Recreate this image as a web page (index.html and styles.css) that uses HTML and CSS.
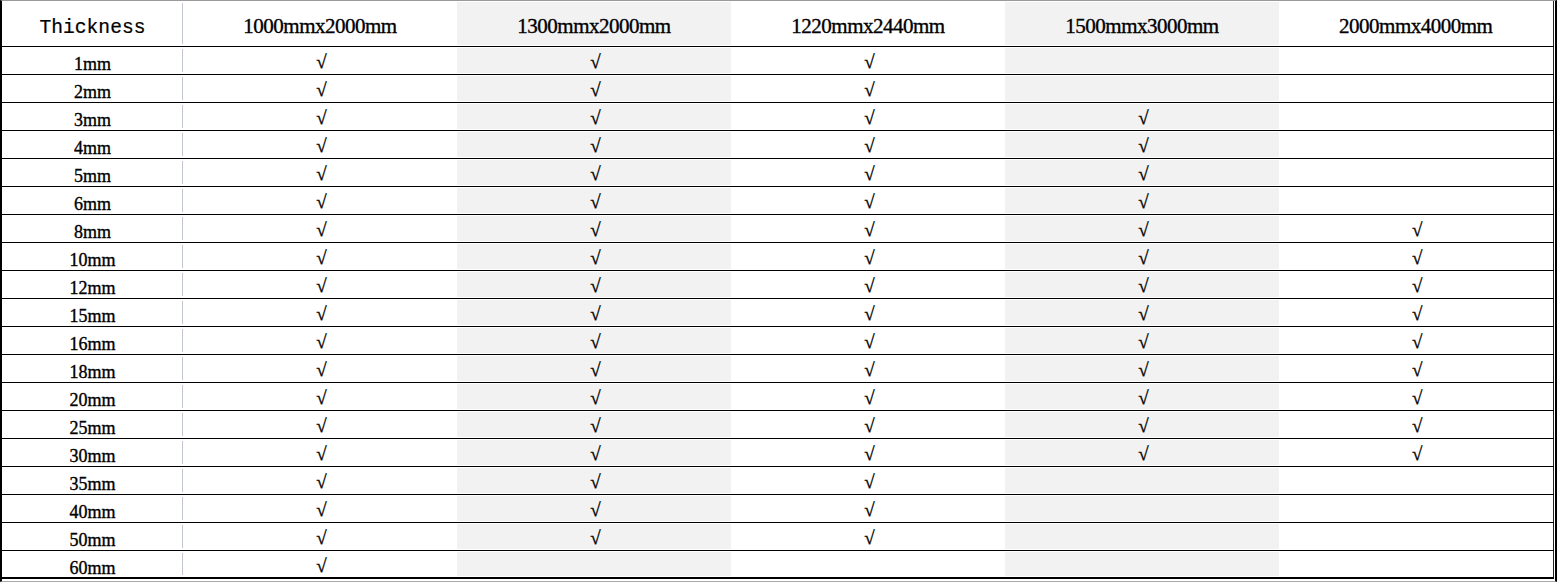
FILE: index.html
```html
<!DOCTYPE html>
<html>
<head>
<meta charset="utf-8">
<link rel="stylesheet" href="styles.css">
</head>
<body>
<div class="frame">
<table class="spec">
<colgroup>
<col class="c-first"><col class="c-size"><col class="c-size"><col class="c-size"><col class="c-size"><col class="c-last">
</colgroup>
<thead>
<tr>
<th class="label mono">Thickness</th>
<th>1000mmx2000mm</th>
<th class="g">1300mmx2000mm</th>
<th>1220mmx2440mm</th>
<th class="g">1500mmx3000mm</th>
<th>2000mmx4000mm</th>
</tr>
</thead>
<tbody>
<tr><td class="label">1mm</td><td>√</td><td class="g">√</td><td>√</td><td class="g"></td><td></td></tr>
<tr><td class="label">2mm</td><td>√</td><td class="g">√</td><td>√</td><td class="g"></td><td></td></tr>
<tr><td class="label">3mm</td><td>√</td><td class="g">√</td><td>√</td><td class="g">√</td><td></td></tr>
<tr><td class="label">4mm</td><td>√</td><td class="g">√</td><td>√</td><td class="g">√</td><td></td></tr>
<tr><td class="label">5mm</td><td>√</td><td class="g">√</td><td>√</td><td class="g">√</td><td></td></tr>
<tr><td class="label">6mm</td><td>√</td><td class="g">√</td><td>√</td><td class="g">√</td><td></td></tr>
<tr><td class="label">8mm</td><td>√</td><td class="g">√</td><td>√</td><td class="g">√</td><td>√</td></tr>
<tr><td class="label">10mm</td><td>√</td><td class="g">√</td><td>√</td><td class="g">√</td><td>√</td></tr>
<tr><td class="label">12mm</td><td>√</td><td class="g">√</td><td>√</td><td class="g">√</td><td>√</td></tr>
<tr><td class="label">15mm</td><td>√</td><td class="g">√</td><td>√</td><td class="g">√</td><td>√</td></tr>
<tr><td class="label">16mm</td><td>√</td><td class="g">√</td><td>√</td><td class="g">√</td><td>√</td></tr>
<tr><td class="label">18mm</td><td>√</td><td class="g">√</td><td>√</td><td class="g">√</td><td>√</td></tr>
<tr><td class="label">20mm</td><td>√</td><td class="g">√</td><td>√</td><td class="g">√</td><td>√</td></tr>
<tr><td class="label">25mm</td><td>√</td><td class="g">√</td><td>√</td><td class="g">√</td><td>√</td></tr>
<tr><td class="label">30mm</td><td>√</td><td class="g">√</td><td>√</td><td class="g">√</td><td>√</td></tr>
<tr><td class="label">35mm</td><td>√</td><td class="g">√</td><td>√</td><td class="g"></td><td></td></tr>
<tr><td class="label">40mm</td><td>√</td><td class="g">√</td><td>√</td><td class="g"></td><td></td></tr>
<tr><td class="label">50mm</td><td>√</td><td class="g">√</td><td>√</td><td class="g"></td><td></td></tr>
<tr><td class="label">60mm</td><td>√</td><td class="g"></td><td></td><td class="g"></td><td></td></tr>
</tbody>
</table>
</div>
</body>
</html>
```

FILE: styles.css
```css
html, body {
  margin: 0;
  padding: 0;
  background: #ffffff;
}

.frame {
  width: 1557px;
  height: 582px;
  box-sizing: border-box;
  border-top: 1px solid #9a9a9a;
  border-left: 2px solid #000;
  border-right: 2px solid #000;
  border-bottom: 1px solid #a8a8a8;
  padding-right: 2px;
  overflow: hidden;
}

.spec {
  width: 1551px;
  table-layout: fixed;
  border-collapse: collapse;
  border-right: 1px solid #222;
  border-bottom: 2px solid #000;
  font-family: "Liberation Serif", "Times New Roman", serif;
  color: #000;
  -webkit-text-stroke: 0.35px #000;
}

.c-first { width: 181px; }
.c-size { width: 274px; }
.c-last { width: 274px; }

.spec th,
.spec td {
  padding: 0;
  text-align: center;
  border-bottom: 1px solid #000;
  box-sizing: border-box;
}

.spec th {
  height: 45px;
  font-weight: normal;
  font-size: 21px;
  letter-spacing: -0.5px;
  line-height: 24px;
  vertical-align: top;
  padding-top: 13px;
}

.spec th.mono {
  font-family: "Liberation Mono", "Courier New", monospace;
  font-size: 19.6px;
  letter-spacing: 0;
  padding-top: 15px;
  -webkit-text-stroke: 0.2px #000;
}

.spec td {
  height: 28px;
  font-size: 19px;
  line-height: 18px;
  vertical-align: top;
  padding-top: 6px;
  padding-left: 3px;
}

.spec td.label {
  font-size: 18px;
  line-height: 18px;
  padding-top: 8px;
  padding-left: 0;
}

.spec .label {
  background: linear-gradient(#c3c7d1, #c3c7d1) right center / 1px calc(100% - 4px) no-repeat;
}

.spec .g {
  background: #f2f2f2;
  box-shadow: inset 0 1px 0 #fff, inset 0 -1px 0 #fff;
}
```
